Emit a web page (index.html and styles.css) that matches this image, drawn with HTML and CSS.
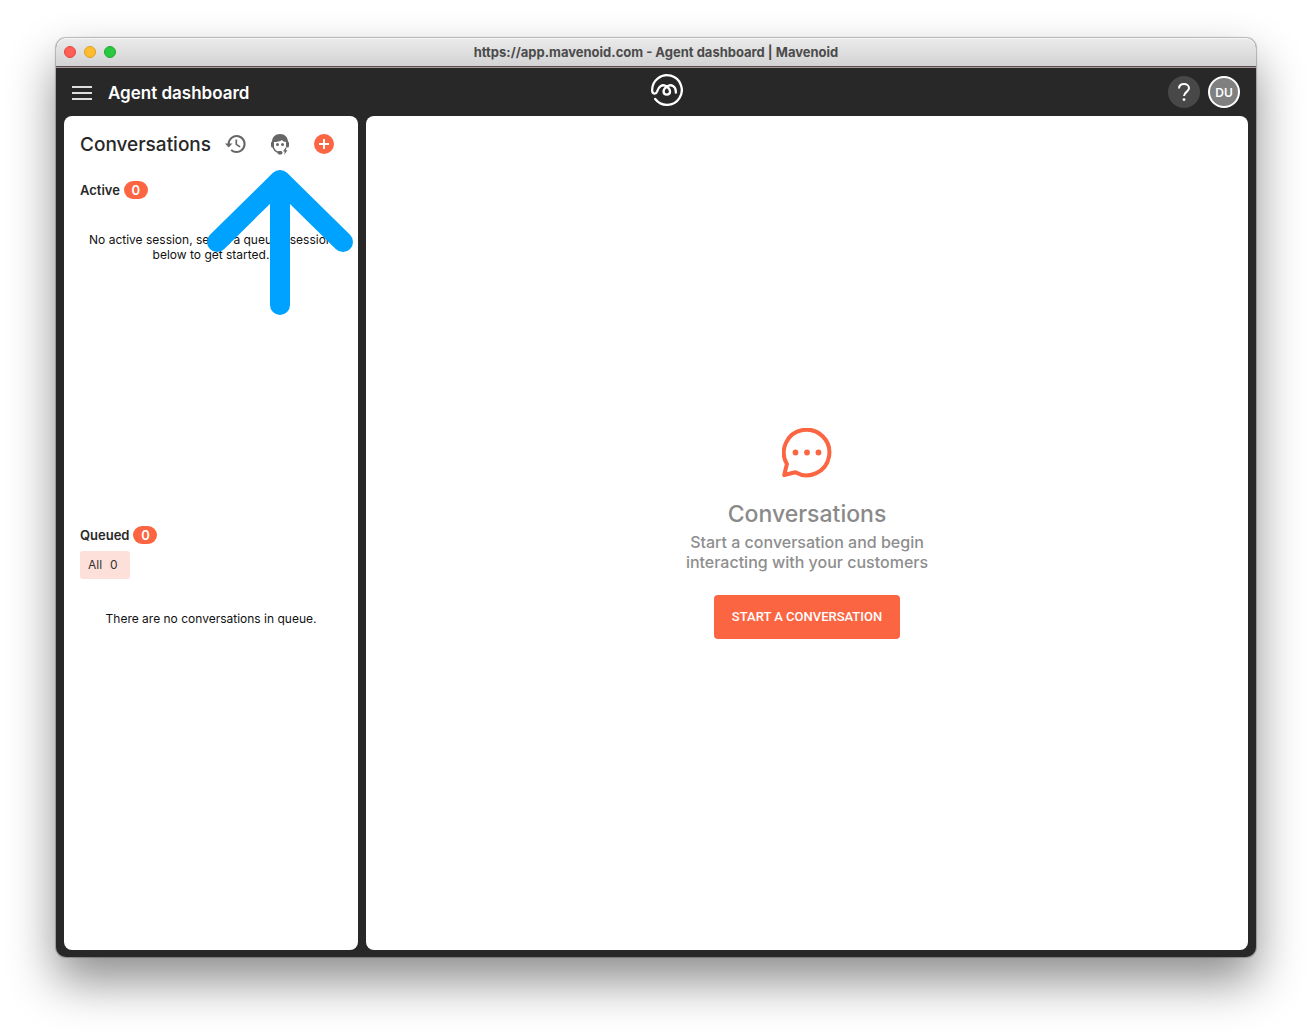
FILE: index.html
```html
<!DOCTYPE html>
<html lang="en">
<head>
  <meta charset="UTF-8">
  <meta name="viewport" content="width=device-width, initial-scale=1.0">
  <title>Agent dashboard | Mavenoid</title>
  <link rel="stylesheet" href="styles.css">
</head>
<body>
  <div class="window">
    <div class="titlebar">
      <div class="lights">
        <span class="light red"></span>
        <span class="light yellow"></span>
        <span class="light green"></span>
      </div>
      <div class="titlebar-text">https://app.mavenoid.com - Agent dashboard | Mavenoid</div>
    </div>

    <header class="topbar">
      <div class="topbar-left">
        <button class="icon-btn menu-btn" aria-label="Menu">
          <svg width="20" height="14" viewBox="0 0 20 14" stroke="currentColor" stroke-width="2"><path d="M0 1h20M0 7h20M0 13h20"/></svg>
        </button>
        <h1 class="page-title">Agent dashboard</h1>
      </div>
      <a class="logo" href="#" aria-label="Mavenoid">
        <svg width="32" height="32" viewBox="0 0 32 32" fill="none" stroke="#fff" stroke-width="2.3" stroke-linecap="round" stroke-linejoin="round">
          <path d="M4.2 25A14.8 14.8 0 1 0 1.2 17C1.4 20.2 5 20.4 6 17.6C7.400 12.600 11.400 9.400 15.800 12.600C20.600 16 19.600 20.600 15.800 20.600C12 20.600 11 16 15.800 12.600C20 9.600 25.200 12 24.800 18.600"/>
        </svg>
      </a>
      <div class="topbar-right">
        <button class="round-btn help" aria-label="Help">
          <svg width="14" height="20" viewBox="0 0 14 20" fill="none" stroke="#fff" stroke-width="2">
            <path d="M2 6.5C2 3.6 4.2 2 7 2s5 1.700 5 4.300c0 3.400-5 3.800-5 7.700"/>
            <circle cx="7" cy="17.6" r="1.4" fill="#fff" stroke="none"/>
          </svg>
        </button>
        <button class="round-btn avatar">DU</button>
      </div>
    </header>

    <div class="panels">
      <aside class="sidebar">
        <div class="sidebar-head">
          <h2 class="sidebar-title">Conversations</h2>
          <div class="actions">
            <button class="icon-btn action" aria-label="History">
              <svg width="22" height="20" viewBox="0 0 22 20" fill="none" stroke="currentColor" stroke-width="2">
                <path d="M3.6 10A8 8 0 1 1 6.2 15.9"/>
                <path d="M0 9.4h7.4L3.7 13.4z" fill="currentColor" stroke="none"/>
                <path d="M11.3 5.4v5l3.8 2.5" stroke-width="1.7"/>
              </svg>
            </button>
            <div class="action-wrap">
              <button class="icon-btn action" aria-label="Agent status">
                <svg width="20" height="22" viewBox="0 0 20 22" fill="none">
                  <path d="M3 9v3.5a7 7 0 0 0 6.5 7" stroke="currentColor" stroke-width="1.6"/>
                  <path d="M17 8v5" stroke="currentColor" stroke-width="1.6"/>
                  <path d="M2 9C2 4 5.300 1 10 1s8 3 8 8h-1.600C14 9 12.800 8 12 7c-2 1.600-5 2-8.400 2z" fill="currentColor"/>
                  <rect x="1" y="8.500" width="3" height="6" rx="1.500" fill="currentColor"/>
                  <rect x="16" y="8.500" width="3" height="6" rx="1.500" fill="currentColor"/>
                  <circle cx="7.500" cy="11.500" r="1.500" fill="currentColor"/>
                  <circle cx="12.500" cy="11.500" r="1.500" fill="currentColor"/>
                  <rect x="7.500" y="18" width="5" height="3.400" rx="1.700" fill="currentColor"/>
                  <path d="M15.600 14.500l-2.600 4h1.800l-.6 3.200 3.300-4.400h-1.900l1.200-2.800z" fill="currentColor"/>
                </svg>
              </button>
              <svg class="pointer" width="148" height="148" viewBox="0 0 148 148" fill="none" stroke="#00a2ff" stroke-width="20" stroke-linecap="round" stroke-linejoin="round">
                <path d="M74 12v125M11 74L74 12l63 62"/>
                <path d="M64 18h20v19H64z" fill="#00a2ff" stroke="none"/>
              </svg>
            </div>
            <button class="icon-btn action" aria-label="New conversation">
              <svg width="20" height="20" viewBox="0 0 20 20">
                <circle cx="10" cy="10" r="10" fill="#fb6542"/>
                <path d="M10 5v10M5 10h10" stroke="#fff" stroke-width="2"/>
              </svg>
            </button>
          </div>
        </div>

        <section class="group">
          <h3 class="group-title">Active <span class="badge">0</span></h3>
          <p class="empty">No active session, select a queued session below to get started.</p>
        </section>

        <section class="group">
          <h3 class="group-title">Queued <span class="badge">0</span></h3>
          <button class="filter"><span>All</span><span>0</span></button>
          <p class="empty">There are no conversations in queue.</p>
        </section>
      </aside>

      <main class="content">
        <svg class="bubble" width="50" height="50" viewBox="0 0 50 50" fill="none" stroke="#fb6542" stroke-width="4" stroke-linejoin="round">
          <path d="M4.900 36A22.800 22.800 0 1 1 13.300 44.300L2.200 47z"/>
          <g fill="#fb6542" stroke="none"><circle cx="13.500" cy="24.500" r="2.900"/><circle cx="25" cy="24.500" r="2.900"/><circle cx="36.500" cy="24.500" r="2.900"/></g>
        </svg>
        <h2 class="content-title">Conversations</h2>
        <p class="content-text">Start a conversation and begin<br>interacting with your customers</p>
        <button class="start-btn">START A CONVERSATION</button>
      </main>
    </div>
  </div>
</body>
</html>
```
FILE: styles.css
```css
* {
  box-sizing: border-box;
}
body {
  margin: 0;
  min-height: 100vh;
  padding: 38px 56px 74px;
  display: flex;
  background: #fff;
  color: #282828;
  font-family: Inter, "Liberation Sans", sans-serif;
  overflow-x: hidden;
}
h1, h2, h3, p {
  margin: 0;
}
button {
  font-family: inherit;
  border: none;
  cursor: pointer;
}
svg {
  display: block;
}
.window {
  flex: 1;
  display: flex;
  flex-direction: column;
  background: #282828;
  border-radius: 10px;
  box-shadow: 0 0 1px 1px rgba(0, 0, 0, 0.25), 0 24px 48px rgba(0, 0, 0, 0.45);
}

/* browser title bar */
.titlebar {
  display: grid;
  grid-template-columns: 1fr auto 1fr;
  align-items: center;
  height: 30px;
  padding: 0 8px 2px;
  border-radius: 10px 10px 0 0;
  border-bottom: 1px solid #a89a96;
  background: linear-gradient(#ebebeb, #d2d2d2);
  box-shadow: inset 0 1px 0 #f6f6f6, inset 0 -1px 0 #554d4d;
}
.lights {
  display: flex;
  gap: 8px;
}
.light {
  width: 12px;
  height: 12px;
  border-radius: 50%;
}
.red {
  background: #ff5f57;
  border: 1px solid #e2463f;
}
.yellow {
  background: #febc2e;
  border: 1px solid #dfa023;
}
.green {
  background: #28c840;
  border: 1px solid #1dab2f;
}
.titlebar-text {
  font-size: 13px;
  font-weight: 700;
  color: #4b4b4b;
}

/* app header */
.topbar {
  display: grid;
  grid-template-columns: 1fr auto 1fr;
  align-items: center;
  height: 48px;
  padding: 0 16px;
}
.topbar-left, .topbar-right {
  display: flex;
  align-items: center;
}
.topbar-left {
  gap: 16px;
  padding-top: 2px;
}
.topbar-right {
  justify-content: flex-end;
  gap: 8px;
}
.icon-btn {
  display: flex;
  align-items: center;
  justify-content: center;
  padding: 0;
  background: none;
}
.menu-btn {
  color: #dedede;
}
.page-title {
  color: #fff;
  font-size: 17px;
  font-weight: 600;
}
.logo {
  padding: 0 0 4px 22px;
}
.round-btn {
  display: flex;
  align-items: center;
  justify-content: center;
  width: 32px;
  height: 32px;
  padding: 0;
  border-radius: 50%;
  color: #fff;
}
.help {
  background: #484848;
}
.avatar {
  background: #808080;
  border: 2px solid #fff;
  font-size: 12px;
  font-weight: 600;
}

/* panels */
.panels {
  flex: 1;
  display: grid;
  grid-template-columns: 294px 1fr;
  gap: 8px;
  padding: 0 8px 7px;
}
.sidebar, .content {
  background: #fff;
  border-radius: 8px;
}
.sidebar {
  display: grid;
  grid-template-rows: 58px 4fr 5fr;
}
.sidebar-head {
  display: flex;
  align-items: center;
  justify-content: space-between;
  padding: 0 12px 2px 16px;
}
.sidebar-title {
  font-size: 19px;
  font-weight: 500;
}
.actions {
  display: flex;
}
.action {
  width: 44px;
  height: 44px;
  color: #666;
}
.action-wrap {
  position: relative;
}
.pointer {
  position: absolute;
  top: 46px;
  left: 50%;
  transform: translateX(-50%);
  pointer-events: none;
}
.group {
  padding: 6px 16px 0;
}
.group-title {
  display: flex;
  align-items: center;
  gap: 4px;
  height: 20px;
  font-size: 13px;
  font-weight: 600;
}
.badge {
  width: 24px;
  border-radius: 9px;
  background: #fb6542;
  color: #fff;
  line-height: 18px;
  text-align: center;
}
.empty {
  padding: 32px 6px 0;
  font-size: 12px;
  line-height: 15px;
  text-align: center;
  color: #111;
}
.filter {
  display: flex;
  gap: 8px;
  margin-top: 6px;
  padding: 0 12px 0 8px;
  border-radius: 3px;
  background: #fee0da;
  color: #333;
  font-size: 12px;
  line-height: 28px;
}
.content {
  display: flex;
  flex-direction: column;
  align-items: center;
  justify-content: center;
}
.content-title {
  margin-top: 18px;
  color: #8a8a8a;
  font-size: 23px;
  font-weight: 500;
  line-height: 36px;
}
.content-text {
  color: #8e8e8e;
  font-size: 16px;
  font-weight: 500;
  line-height: 20px;
  text-align: center;
}
.start-btn {
  height: 44px;
  margin-top: 23px;
  padding: 0 18px;
  border-radius: 4px;
  background: #fb6542;
  color: #fff;
  font-family: Roboto, sans-serif;
  font-size: 13px;
  font-weight: 500;
}
```
